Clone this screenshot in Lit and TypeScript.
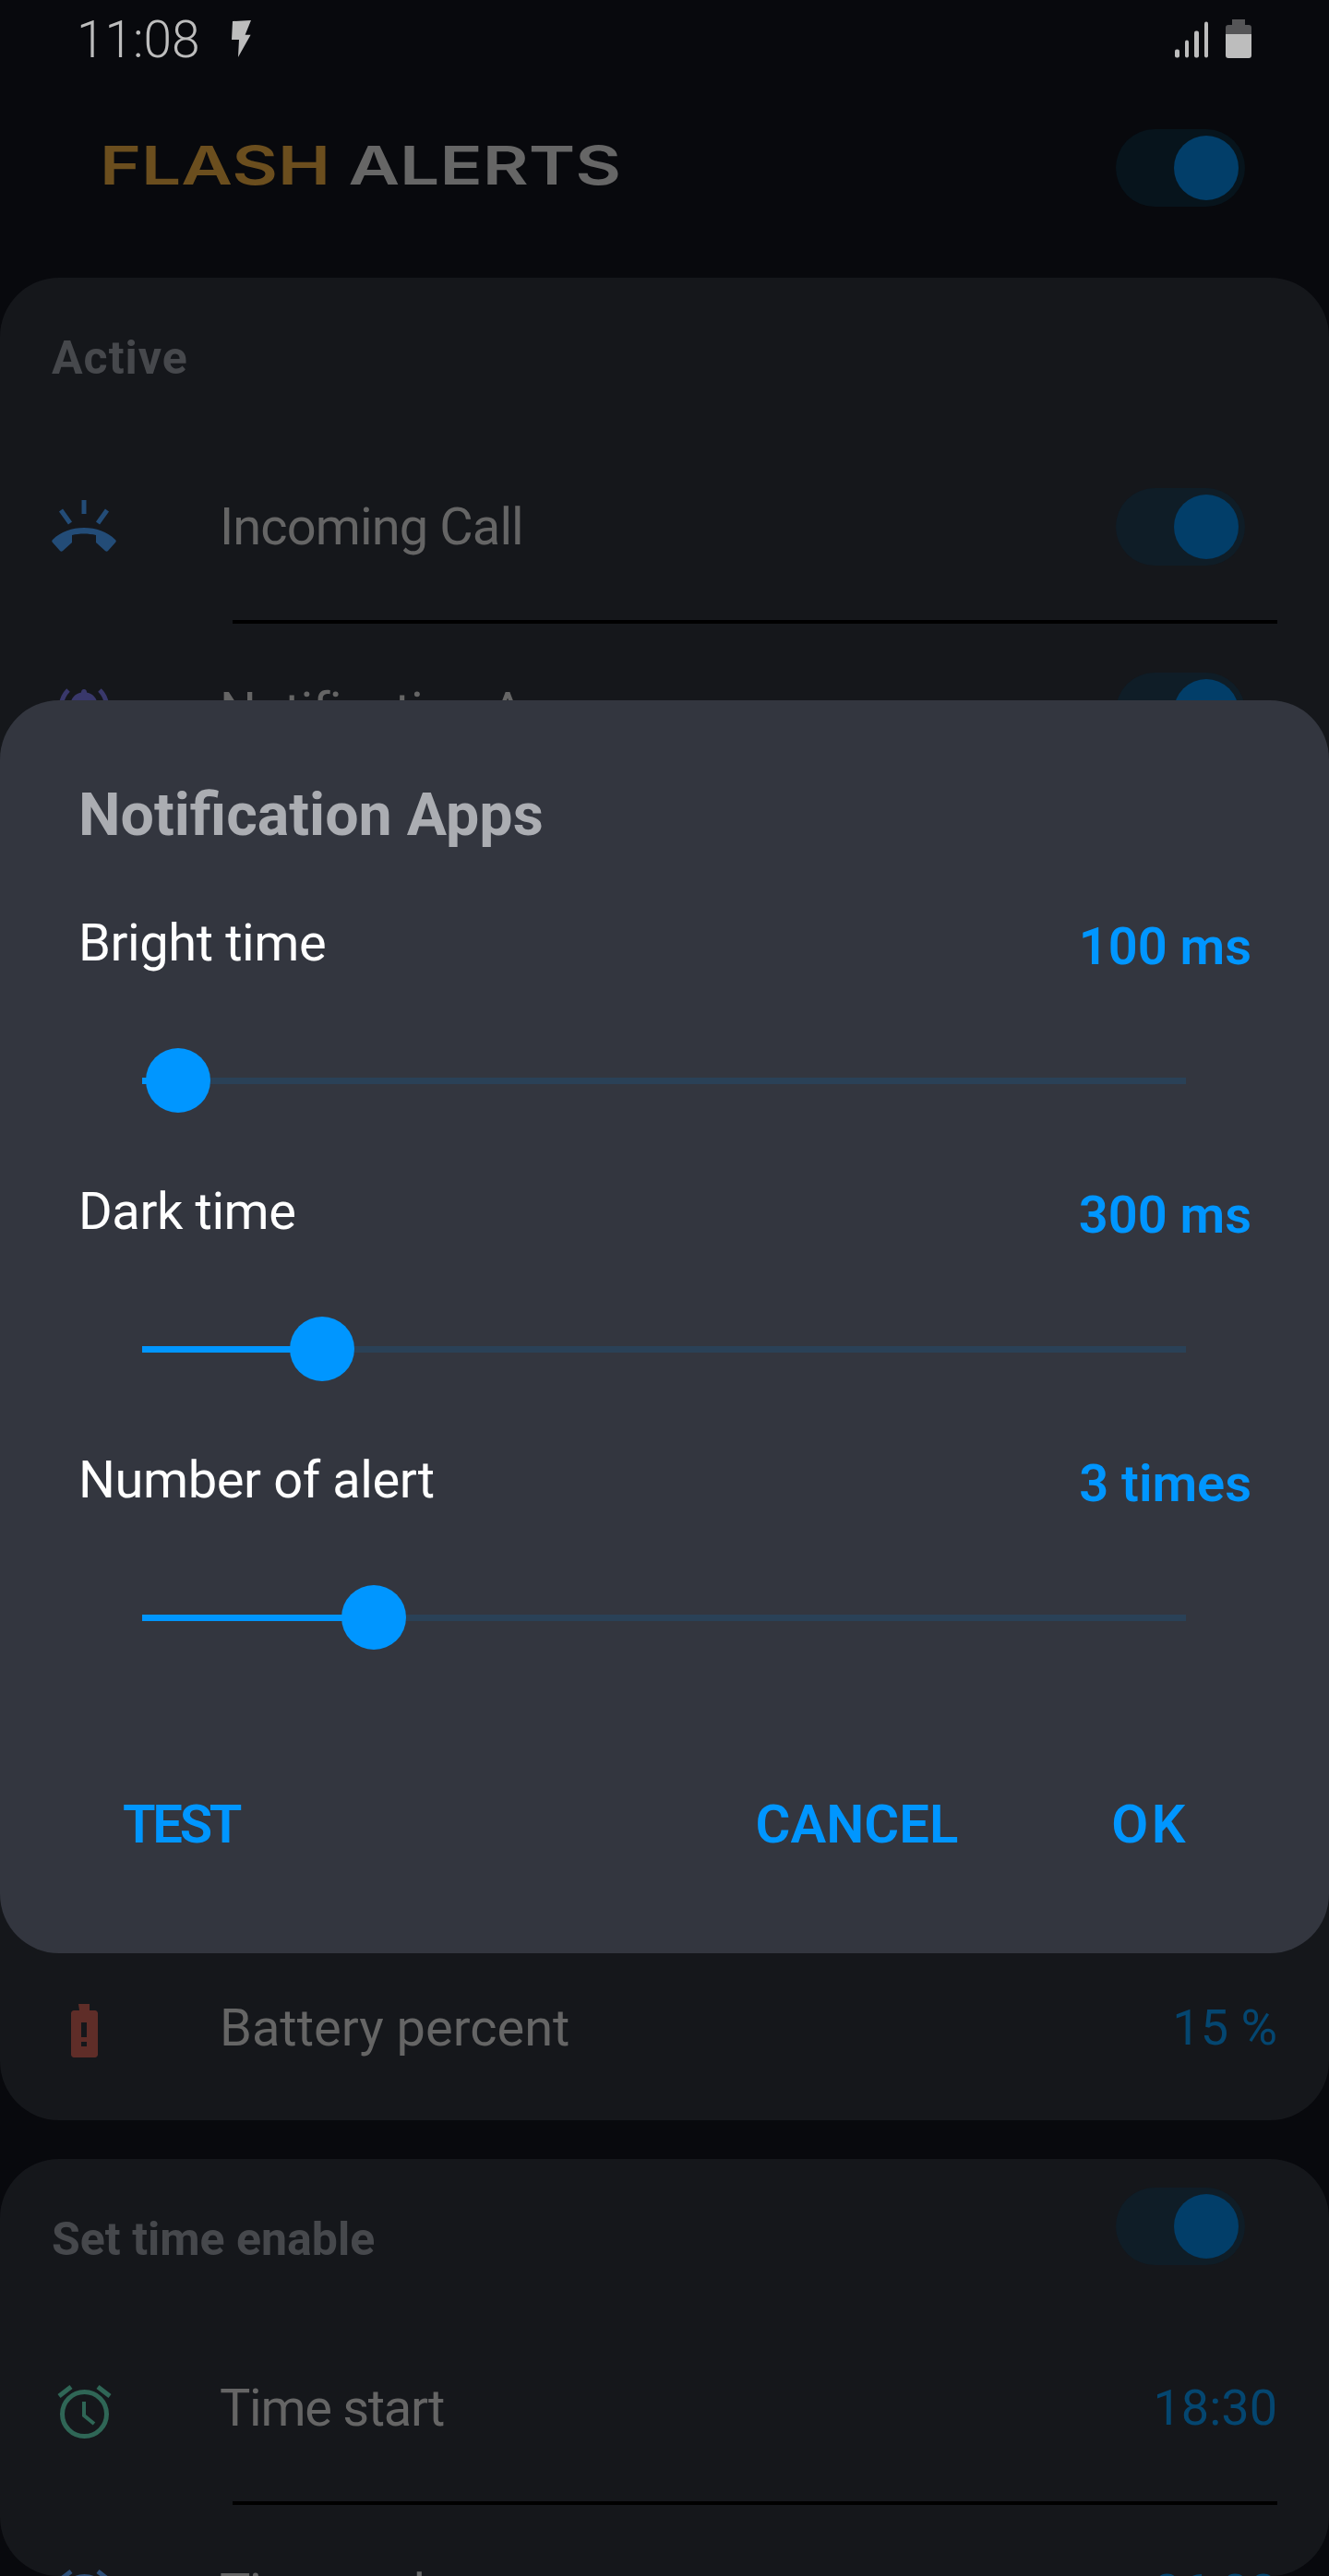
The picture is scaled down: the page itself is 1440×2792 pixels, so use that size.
import { css, html, LitElement, svg } from 'lit'
import { customElement } from 'lit/decorators.js'

interface SliderSetting {
  label: string
  value: string
  position: number
}

const SETTINGS: SliderSetting[] = [
  { label: 'Bright time', value: '100 ms', position: 39 },
  { label: 'Dark time', value: '300 ms', position: 195 },
  { label: 'Number of alert', value: '3 times', position: 251 },
]

const ringIcon = svg`
  <path d="M35 0v15M10 11l10 14M60 11L50 25" class="line" stroke-width="5" />
  <path
    class="fill"
    stroke-linejoin="round"
    d="M1 43C10 34 22 30 35 30s25 4 34 13c1 1 1 2 0 3l-8 9c-1 1-2 1-3 0L48 46v-8c-8-2-18-2-26 0v8L12 55c-1 1-2 1-3 0l-8-9c-1-1-1-2 0-3z"
  />
`

const bellIcon = svg`
  <path class="fill" d="M29 5c2 0 3 1.500 3 3.500 8 1.500 12 8 12 16v14l5 6H9l5-6v-14c0-8 4-14.500 12-16C26 6.500 27 5 29 5z" />
  <path class="line" stroke-width="5" d="M12 6C6 12 4 18 4 26M46 6c6 6 8 12 8 20" />
`

const batteryIcon = svg`
  <path
    class="fill"
    fill-rule="evenodd"
    d="M8 0h12v7h6c1.500 0 3 1.500 3 3v45c0 1.500-1.500 3-3 3H3c-1.500 0-3-1.500-3-3V10c0-1.500 1.500-3 3-3h6zM11 20v16h6V20zM11 41v5h6v-5z"
  />
`

const clockIcon = svg`
  <circle class="line" cx="29.500" cy="31.500" r="24" stroke-width="5" />
  <path class="line" stroke-width="5" d="M2 12L15 2M57 12L44 2" />
  <path class="line" stroke-width="4" d="M29 18v15l11 9" />
`

@customElement('app-root')
export class AppRoot extends LitElement {
  static styles = css`
    :host {
      position: relative;
      display: block;
      width: 1440px;
      height: 2792px;
      overflow: hidden;
      background: #08090d;
      color: #656565;
      font-family: Roboto, 'Liberation Sans', sans-serif;
    }

    .status {
      display: flex;
      align-items: center;
      height: 84px;
      padding: 0 84px 0 83px;
      box-sizing: border-box;
      color: #bdbdbd;
    }

    .clock {
      margin-top: 3px;
      font-size: 55px;
      font-weight: 300;
      line-height: 81px;
    }

    .bolt {
      width: 23px;
      height: 41px;
      margin-left: 33px;
      fill: #bdbdbd;
    }

    .signal {
      display: flex;
      align-items: flex-end;
      gap: 6px;
      height: 39px;
      margin: 0 19px 0 auto;
      transform: translateY(0.500px);
    }

    .signal span {
      width: 4.500px;
      border-radius: 2px;
      background: #bdbdbd;
    }

    .battery {
      width: 28px;
      height: 42px;
    }

    .appbar {
      display: flex;
      align-items: center;
      height: 195px;
      margin-bottom: 22px;
      padding: 0 91px 0 108px;
      box-sizing: border-box;
    }

    .logo {
      margin-top: -6px;
      font-family: Inter, sans-serif;
      font-size: 58px;
      font-weight: 600;
      line-height: 1;
      white-space: pre;
      transform: scaleX(1.32);
      transform-origin: left center;
    }

    .logo .flash {
      color: #6b4e1e;
    }

    .logo .alerts {
      color: #666666;
    }

    .toggle {
      position: relative;
      flex: none;
      width: 140px;
      height: 84px;
      margin-left: auto;
      border-radius: 42px;
      background: #0f1d27;
    }

    .appbar .toggle {
      background: #07141c;
    }

    .toggle::after {
      position: absolute;
      top: 7px;
      right: 7px;
      width: 70px;
      height: 70px;
      border-radius: 50%;
      background: #023e69;
      content: '';
    }

    .card {
      display: flex;
      flex-direction: column;
      border-radius: 64px;
      background: #15171b;
    }

    .card.alerts-card {
      height: 1997px;
      margin-bottom: 42px;
    }

    .card.time-card {
      height: 452px;
    }

    .section {
      display: flex;
      align-items: flex-start;
      height: 170px;
      padding: 0 91px 0 56px;
      box-sizing: border-box;
      flex: none;
    }

    .section h2 {
      margin: 64px 0 0;
      color: #46484c;
      font-size: 50px;
      font-weight: 700;
      line-height: 46px;
    }

    .section h2.short {
      letter-spacing: 1px;
    }

    .section .toggle {
      margin-top: 31px;
    }

    .row {
      display: flex;
      flex: none;
      align-items: center;
      height: 200px;
      padding: 0 56px;
      box-sizing: border-box;
    }

    .icon {
      display: flex;
      flex: none;
      justify-content: center;
      width: 70px;
      margin-right: 112px;
    }

    .icon svg {
      display: block;
      overflow: visible;
    }

    .icon .line {
      fill: none;
      stroke: var(--tint);
    }

    .icon .fill {
      fill: var(--tint);
    }

    .icon.ring {
      --tint: #234c77;
    }

    .icon.bell {
      --tint: #39386b;
    }

    .icon.low {
      --tint: #5f2d28;
      margin-top: 6px;
    }

    .icon.start {
      --tint: #2f6656;
      margin-top: 8px;
    }

    .icon.end {
      --tint: #2e507a;
      margin-top: 8px;
    }

    .name {
      font-size: 56px;
      font-weight: 400;
      letter-spacing: -0.900px;
      line-height: 64px;
    }

    .low + .name {
      letter-spacing: 0;
    }

    .start + .name,
    .end + .name {
      letter-spacing: -1.300px;
    }

    .row .toggle {
      margin-right: 35px;
    }

    .amount {
      margin-left: auto;
      color: #044670;
      font-size: 54px;
      line-height: 64px;
    }

    .divider {
      flex: none;
      height: 4px;
      margin: 1px 56px -5px 252px;
      background: #000000;
    }

    .covered {
      flex: 1;
    }

    .dialog {
      position: absolute;
      top: 759px;
      right: 0;
      left: 0;
      display: flex;
      flex-direction: column;
      height: 1358px;
      padding-top: 89px;
      box-sizing: border-box;
      border-radius: 64px;
      background: #33363f;
    }

    .dialog h1 {
      margin: 0 0 72px 85px;
      color: #abadb2;
      font-size: 64.500px;
      font-weight: 700;
      line-height: 70px;
    }

    .setting {
      height: 291px;
      flex: none;
    }

    .setting-head {
      display: flex;
      align-items: center;
      justify-content: space-between;
      height: 64px;
      padding: 0 84px 0 85px;
      color: #ffffff;
      font-size: 56px;
      letter-spacing: -0.400px;
    }

    .setting-head b {
      margin-top: 7px;
      color: #0096ff;
      font-size: 56px;
      font-weight: 600;
      letter-spacing: 0;
    }

    .track {
      position: relative;
      height: 7px;
      margin: 114px 155px 0 154px;
      background: #2a4157;
    }

    .track .done {
      height: 100%;
      background: #0096ff;
    }

    .track .thumb {
      position: absolute;
      top: -32px;
      width: 70px;
      height: 70px;
      margin-left: -35px;
      border-radius: 50%;
      background: #0096ff;
    }

    .actions {
      display: flex;
      margin-top: 82px;
      padding: 0 152px 0 133px;
      color: #0096ff;
      font-size: 58px;
      font-weight: 600;
      line-height: 64px;
    }

    .actions .test {
      letter-spacing: -3.300px;
    }

    .actions .cancel {
      margin: 0 166px 0 auto;
    }

    .actions .ok {
      letter-spacing: 3.500px;
    }
  `

  private renderToggle() {
    return html`<div class="toggle"></div>`
  }

  private renderRow(
    kind: string,
    icon: unknown,
    width: number,
    name: string,
    trailing: unknown,
  ) {
    return html`
      <div class="row">
        <div class="icon ${kind}">
          <svg width=${width} height="58" viewBox="0 0 ${width} 58">${icon}</svg>
        </div>
        <span class="name">${name}</span>
        ${trailing}
      </div>
    `
  }

  private renderSetting(setting: SliderSetting) {
    return html`
      <div class="setting">
        <div class="setting-head">
          <span>${setting.label}</span>
          <b>${setting.value}</b>
        </div>
        <div class="track">
          <div class="done" style="width: ${setting.position}px"></div>
          <div class="thumb" style="left: ${setting.position}px"></div>
        </div>
      </div>
    `
  }

  render() {
    return html`
      <div class="status">
        <span class="clock">11:08</span>
        <svg class="bolt" viewBox="0 0 23 41">
          <path d="M2 1L22 0 15.600 15.700h6L8 40l1-19H1z" />
        </svg>
        <div class="signal">
          <span style="height: 9px"></span>
          <span style="height: 19px"></span>
          <span style="height: 29px"></span>
          <span style="height: 39px"></span>
        </div>
        <svg class="battery" viewBox="0 0 28 42">
          <path fill="#555557" d="M7 0h14v6h4c2 0 3 1 3 3v7H0V9c0-2 1-3 3-3h4z" />
          <path fill="#bdbdbd" d="M0 16h28v23c0 2-1 3-3 3H3c-2 0-3-1-3-3z" />
        </svg>
      </div>

      <div class="appbar">
        <div class="logo"><span class="flash">FLASH</span> <span class="alerts">ALERTS</span></div>
        ${this.renderToggle()}
      </div>

      <section class="card alerts-card">
        <div class="section"><h2 class="short">Active</h2></div>
        ${this.renderRow('ring', ringIcon, 70, 'Incoming Call', this.renderToggle())}
        <div class="divider"></div>
        ${this.renderRow('bell', bellIcon, 58, 'Notification Apps', this.renderToggle())}
        <div class="covered"></div>
        ${this.renderRow(
          'low',
          batteryIcon,
          29,
          'Battery percent',
          html`<span class="amount">15 %</span>`,
        )}
      </section>

      <section class="card time-card">
        <div class="section">
          <h2>Set time enable</h2>
          ${this.renderToggle()}
        </div>
        ${this.renderRow(
          'start',
          clockIcon,
          59,
          'Time start',
          html`<span class="amount">18:30</span>`,
        )}
        <div class="divider"></div>
        ${this.renderRow(
          'end',
          clockIcon,
          59,
          'Time end',
          html`<span class="amount">06:00</span>`,
        )}
      </section>

      <div class="dialog">
        <h1>Notification Apps</h1>
        ${SETTINGS.map((setting) => this.renderSetting(setting))}
        <div class="actions">
          <span class="test">TEST</span>
          <span class="cancel">CANCEL</span>
          <span class="ok">OK</span>
        </div>
      </div>
    `
  }
}
